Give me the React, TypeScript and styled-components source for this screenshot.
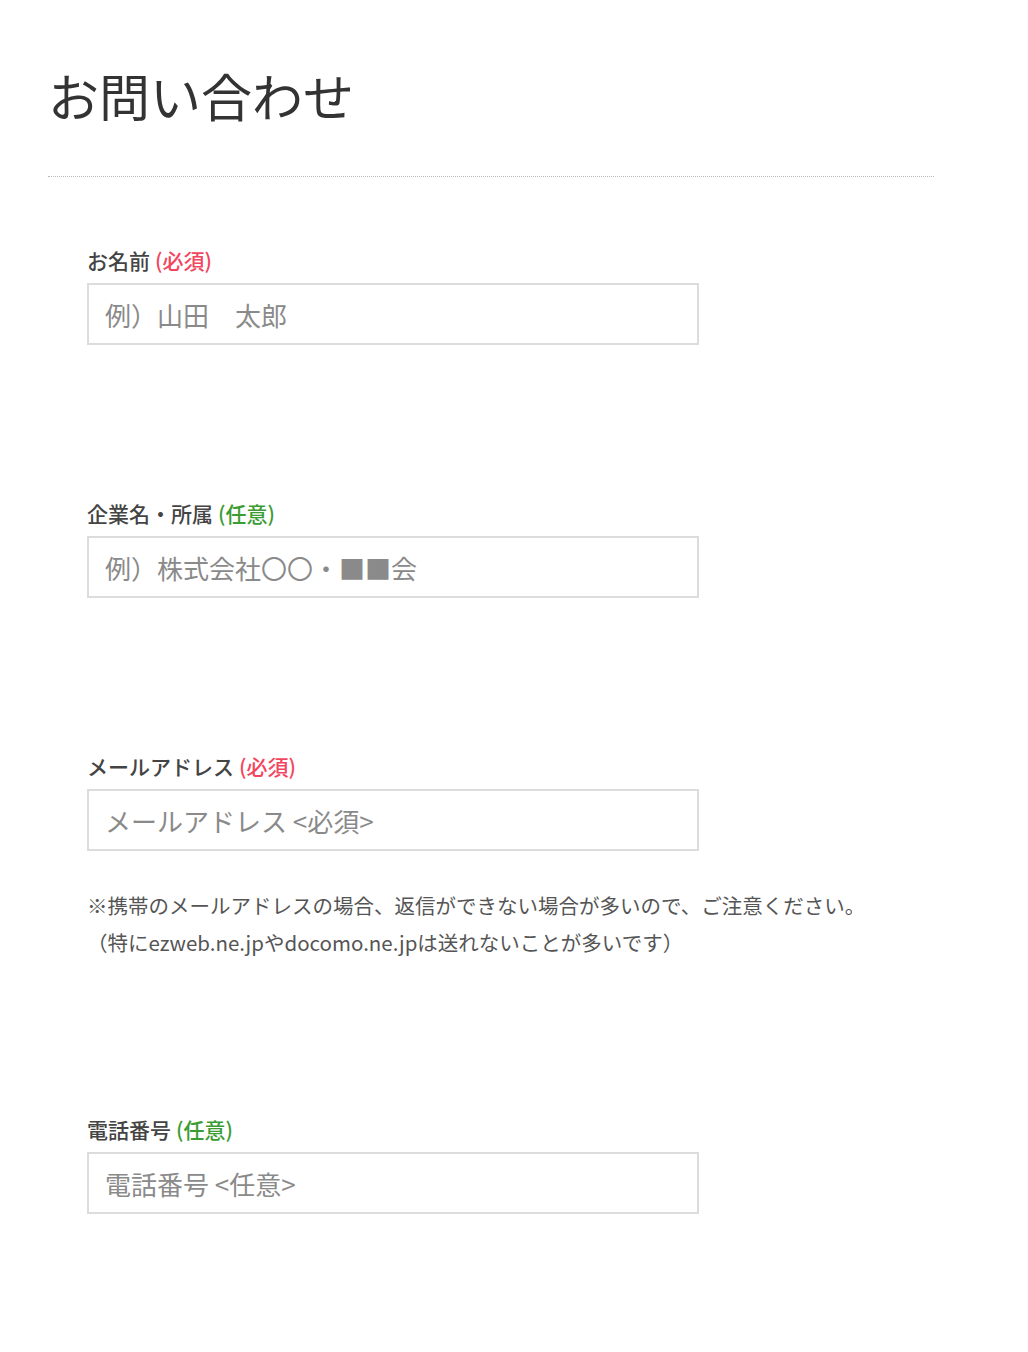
import { createGlobalStyle, styled } from "styled-components";

const GlobalStyle = createGlobalStyle`
  body {
    margin: 0;
    background: #fff;
    font-family: "Noto Sans CJK JP", "Noto Sans", sans-serif;
    color: #333;
  }
`;

interface Field {
  label: string;
  required: boolean;
  placeholder: string;
  type?: string;
  notes?: string[];
}

const fields: Field[] = [
  { label: "お名前", required: true, placeholder: "例）山田　太郎" },
  { label: "企業名・所属", required: false, placeholder: "例）株式会社〇〇・■■会" },
  {
    label: "メールアドレス",
    required: true,
    placeholder: "メールアドレス <必須>",
    type: "email",
    notes: [
      "※携帯のメールアドレスの場合、返信ができない場合が多いので、ご注意ください。",
      "（特にezweb.ne.jpやdocomo.ne.jpは送れないことが多いです）",
    ],
  },
  { label: "電話番号", required: false, placeholder: "電話番号 <任意>", type: "tel" },
];

const App = () => {
  return (
    <>
      <GlobalStyle />
      <Page>
        <Header>
          <Title>お問い合わせ</Title>
        </Header>
        <Form>
          {fields.map((f) => (
            <FieldBlock key={f.label}>
              <Label>
                {f.label}
                <Tag $required={f.required}>{f.required ? "(必須)" : "(任意)"}</Tag>
              </Label>
              <Input type={f.type ?? "text"} placeholder={f.placeholder} />
              {f.notes && (
                <Notes>
                  {f.notes.map((n) => (
                    <Note key={n}>{n}</Note>
                  ))}
                </Notes>
              )}
            </FieldBlock>
          ))}
        </Form>
      </Page>
    </>
  );
};

const Page = styled.div`
  width: 886px;
  padding: 65px 0 0 48px;
`;

const Header = styled.div`
  padding-bottom: 51px;
  border-bottom: 1px dotted #b8b8b8;
`;

const Title = styled.h1`
  margin: 0;
  font-size: 51px;
  line-height: 60px;
  font-weight: 400;
  color: #333;
`;

const Form = styled.form`
  padding: 68px 0 0 39px;
`;

const FieldBlock = styled.div`
  margin-bottom: 153px;
`;

const Label = styled.label`
  display: flex;
  align-items: center;
  gap: 5px;
  height: 30px;
  margin-bottom: 8px;
  font-size: 21px;
  font-weight: 500;
  color: #444;
`;

const Tag = styled.span<{ $required: boolean }>`
  color: ${({ $required }) => ($required ? "#f2465f" : "#3c9c34")};
`;

const Input = styled.input`
  display: block;
  box-sizing: border-box;
  width: 612px;
  height: 62px;
  padding: 0 16px;
  border: 2px solid #dcdcdc;
  border-radius: 0;
  background: #fff;
  font-family: "Noto Sans CJK JP", "Noto Sans", sans-serif;
  font-size: 26px;
  color: #333;
  outline: none;
  &::placeholder {
    color: #8a8a8a;
  }
`;

const Notes = styled.div`
  margin: 36px 0 3px;
`;

const Note = styled.p`
  margin: 0;
  font-size: 20.5px;
  line-height: 37px;
  color: #555;
  white-space: nowrap;
`;

export default App;
